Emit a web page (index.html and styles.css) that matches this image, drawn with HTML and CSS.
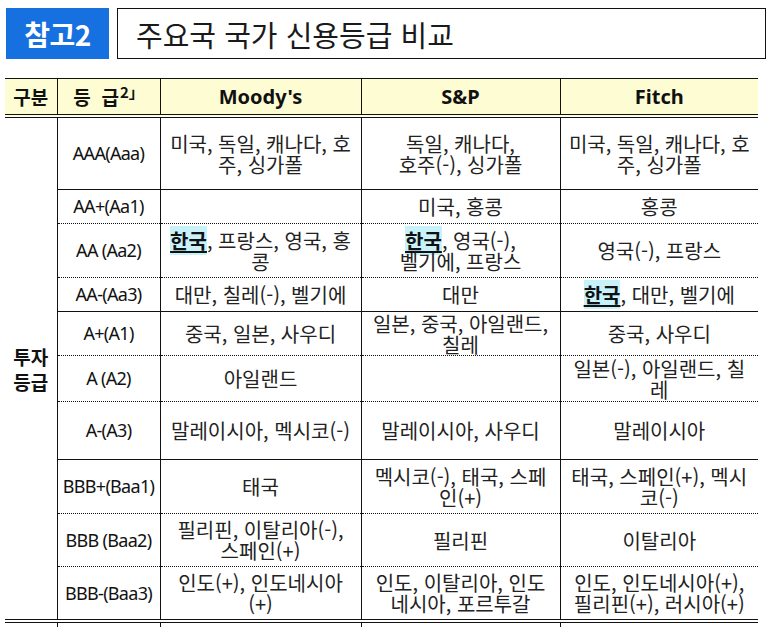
FILE: index.html
```html
<!DOCTYPE html>
<html lang="ko">
<head>
<meta charset="utf-8">
<link rel="stylesheet" href="styles.css">
</head>
<body>
<div class="page">
  <div class="heading">
    <div class="tag">참고2</div>
    <div class="title">주요국 국가 신용등급 비교</div>
  </div>
  <table class="grid">
    <colgroup>
      <col class="c1"><col class="c2"><col class="c3"><col class="c4"><col class="c5">
    </colgroup>
    <thead>
      <tr class="hrow">
        <th class="hk">구분</th>
        <th class="hk">등&nbsp;&nbsp;급<sup>2」</sup></th>
        <th class="hl">Moody's</th>
        <th class="hl">S&amp;P</th>
        <th class="hl">Fitch</th>
      </tr>
    </thead>
    <tbody>
      <tr class="r71 solid">
        <td class="cat" rowspan="10">투자<br>등급</td>
        <td class="gr">AAA(Aaa)</td>
        <td>미국, 독일, 캐나다, 호<br>주, 싱가폴</td>
        <td>독일, 캐나다,<br>호주(-), 싱가폴</td>
        <td>미국, 독일, 캐나다, 호<br>주, 싱가폴</td>
      </tr>
      <tr class="r34 dot">
        <td class="gr">AA+(Aa1)</td>
        <td></td>
        <td>미국, 홍콩</td>
        <td>홍콩</td>
      </tr>
      <tr class="r54 dot">
        <td class="gr">AA (Aa2)</td>
        <td><span class="kr">한국</span>, 프랑스, 영국, 홍<br>콩</td>
        <td><span class="kr">한국</span>, 영국(-),<br>벨기에, 프랑스</td>
        <td>영국(-), 프랑스</td>
      </tr>
      <tr class="r34 solid">
        <td class="gr">AA-(Aa3)</td>
        <td>대만, 칠레(-), 벨기에</td>
        <td>대만</td>
        <td><span class="kr">한국</span>, 대만, 벨기에</td>
      </tr>
      <tr class="r44 dot">
        <td class="gr">A+(A1)</td>
        <td>중국, 일본, 사우디</td>
        <td>일본, 중국, 아일랜드,<br>칠레</td>
        <td>중국, 사우디</td>
      </tr>
      <tr class="r46 dot">
        <td class="gr">A (A2)</td>
        <td>아일랜드</td>
        <td></td>
        <td>일본(-), 아일랜드, 칠<br>레</td>
      </tr>
      <tr class="r58 solid">
        <td class="gr">A-(A3)</td>
        <td>말레이시아, 멕시코(-)</td>
        <td>말레이시아, 사우디</td>
        <td>말레이시아</td>
      </tr>
      <tr class="r54 dot">
        <td class="gr">BBB+(Baa1)</td>
        <td>태국</td>
        <td>멕시코(-), 태국, 스페<br>인(+)</td>
        <td>태국, 스페인(+), 멕시<br>코(-)</td>
      </tr>
      <tr class="r53 dot">
        <td class="gr">BBB (Baa2)</td>
        <td>필리핀, 이탈리아(-),<br>스페인(+)</td>
        <td>필리핀</td>
        <td>이탈리아</td>
      </tr>
      <tr class="r55 dbl">
        <td class="gr">BBB-(Baa3)</td>
        <td>인도(+), 인도네시아<br>(+)</td>
        <td>인도, 이탈리아, 인도<br>네시아, 포르투갈</td>
        <td>인도, 인도네시아(+),<br>필리핀(+), 러시아(+)</td>
      </tr>
      <tr class="r40">
        <td class="cat"></td>
        <td class="gr"></td>
        <td></td>
        <td></td>
        <td></td>
      </tr>
    </tbody>
  </table>
</div>
</body>
</html>
```

FILE: styles.css
```css
html, body {
  margin: 0;
  padding: 0;
  background: #ffffff;
}
body {
  font-family: "Noto Sans CJK KR", "Noto Sans", sans-serif;
  color: #111111;
  overflow: hidden;
}
.page {
  width: 767px;
  height: 627px;
  overflow: hidden;
}
.heading {
  display: flex;
  gap: 8px;
  padding: 8px 1px 0 6px;
  height: 51px;
}
.tag {
  width: 103px;
  height: 51px;
  background: #1670e0;
  color: #ffffff;
  font-weight: 700;
  font-size: 28px;
  display: flex;
  align-items: center;
  justify-content: center;
  letter-spacing: -0.5px;
}
.title {
  flex: 1;
  border: 1.5px solid #111111;
  display: flex;
  align-items: center;
  padding-left: 18px;
  font-size: 29px;
  font-weight: 400;
  color: #1a1a1a;
}
.grid {
  margin: 19px 0 0 5px;
  border-collapse: collapse;
  table-layout: fixed;
  width: 753px;
}
.c1 { width: 52px; }
.c2 { width: 103px; }
.c3 { width: 201px; }
.c4 { width: 199px; }
.c5 { width: 198px; }
.grid th, .grid td {
  padding: 0;
  text-align: center;
  vertical-align: middle;
  border-left: 1px solid #111111;
  white-space: nowrap;
}
.grid th:first-child, .grid td.cat {
  border-left: none;
}
.hrow th {
  height: 35px;
  background: #fefcd3;
  border-top: 1px solid #111111;
  border-bottom: 4px double #111111;
  font-weight: 700;
  color: #111111;
}
.hk {
  font-size: 19px;
}
.hl {
  font-family: "Noto Sans", "Noto Sans CJK KR", sans-serif;
  font-size: 20px;
}
.hk sup {
  font-size: 15px;
  vertical-align: 7px;
  line-height: 0;
  margin-left: 1px;
}
.grid td {
  font-size: 20px;
  line-height: 21px;
  color: #222222;
}
.grid td.gr {
  font-family: "Noto Sans", "Noto Sans CJK KR", sans-serif;
  font-size: 18px;
  letter-spacing: -0.7px;
  color: #111111;
}
.grid td.cat {
  font-weight: 700;
  font-size: 19px;
  line-height: 25px;
  color: #111111;
  border-bottom: 4px double #111111;
}
.r71 td { height: 71px; }
.r34 td { height: 33px; }
.r54 td { height: 53px; }
.r44 td { height: 43px; }
.r46 td { height: 45px; }
.r58 td { height: 57px; }
.r53 td { height: 52px; }
.r55 td { height: 52px; }
.r40 td { height: 40px; }
.solid td { border-bottom: 1px solid #111111; }
.dot td { border-bottom: 1px dotted #111111; }
.dbl td { border-bottom: 4px double #111111; }
.kr {
  font-weight: 700;
  background: #c8f2fa;
  text-decoration: underline;
  text-decoration-thickness: 2px;
  text-underline-offset: 2px;
  color: #111111;
}
```
